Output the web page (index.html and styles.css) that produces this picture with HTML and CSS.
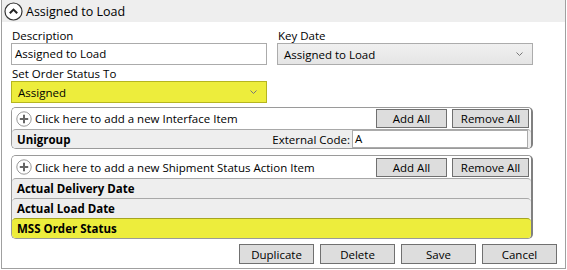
FILE: index.html
```html
<!DOCTYPE html>
<html lang="en">
<head>
  <meta charset="utf-8" />
  <title>Assigned to Load</title>
  <link rel="stylesheet" href="styles.css">
</head>
<body>
  <div class="panel">
    <div class="panel-header">
      <svg class="collapse-icon" width="19" height="19" viewBox="0 0 19 19">
        <circle cx="9.5" cy="9.5" r="8.5" fill="#fff" stroke="#333" stroke-width="1.2" />
        <path d="M5.8 11.3 L9.5 7.6 L13.2 11.3" fill="none" stroke="#222" stroke-width="2" />
      </svg>
      <span class="panel-title">Assigned to Load</span>
    </div>

    <div class="panel-body">
      <div class="form-grid">
        <div class="field">
          <label class="field-label">Description</label>
          <div class="textbox">Assigned to Load</div>
        </div>
        <div class="field">
          <label class="field-label">Key Date</label>
          <div class="combo">
            <span>Assigned to Load</span>
            <svg class="combo-arrow" width="7" height="4" viewBox="0 0 7 4"><path d="M0.5 0.5 L3.5 3.5 L6.5 0.5" fill="none" stroke="#777" stroke-width="1" /></svg>
          </div>
        </div>
        <div class="field">
          <label class="field-label">Set Order Status To</label>
          <div class="combo combo-highlight">
            <span>Assigned</span>
            <svg class="combo-arrow" width="7" height="4" viewBox="0 0 7 4"><path d="M0.5 0.5 L3.5 3.5 L6.5 0.5" fill="none" stroke="#777" stroke-width="1" /></svg>
          </div>
        </div>
      </div>

      <div class="item-box">
        <div class="add-row">
          <svg class="plus-icon" width="16" height="16" viewBox="0 0 16 16">
            <circle cx="8" cy="8" r="7.2" fill="#fff" stroke="#999" stroke-width="1" />
            <path d="M8 3.8 V12.2 M3.8 8 H12.2" stroke="#666" stroke-width="2" />
          </svg>
          <span class="add-text">Click here to add a new Interface Item</span>
          <button class="btn btn-small">Add All</button>
          <button class="btn btn-small btn-wide">Remove All</button>
        </div>
        <div class="item-row item-row-short">
          <span class="item-name">Unigroup</span>
          <span class="code-label">External Code:</span>
          <div class="code-input">A</div>
        </div>
      </div>

      <div class="item-box item-box-actions">
        <div class="add-row add-row-tall">
          <svg class="plus-icon" width="16" height="16" viewBox="0 0 16 16">
            <circle cx="8" cy="8" r="7.2" fill="#fff" stroke="#999" stroke-width="1" />
            <path d="M8 3.8 V12.2 M3.8 8 H12.2" stroke="#666" stroke-width="2" />
          </svg>
          <span class="add-text">Click here to add a new Shipment Status Action Item</span>
          <button class="btn btn-small">Add All</button>
          <button class="btn btn-small btn-wide">Remove All</button>
        </div>
        <div class="item-row"><span class="item-name">Actual Delivery Date</span></div>
        <div class="item-row"><span class="item-name">Actual Load Date</span></div>
        <div class="item-row item-row-highlight"><span class="item-name">MSS Order Status</span></div>
      </div>

      <div class="actions">
        <button class="btn btn-action">Duplicate</button>
        <button class="btn btn-action">Delete</button>
        <button class="btn btn-action">Save</button>
        <button class="btn btn-action">Cancel</button>
      </div>
    </div>
  </div>
</body>
</html>
```

FILE: styles.css
```css
*, *::before, *::after {
  box-sizing: border-box;
}

body {
  margin: 0;
  background: white;
  font-family: "Open Sans", "Noto Sans", sans-serif;
  font-size: 11.5px;
  color: #000;
}

.panel {
  margin-left: 1px;
  width: 565px;
  height: 269px;
  border: 1px solid #a0a0a0;
  border-top: none;
}

.panel-header {
  display: flex;
  align-items: center;
  gap: 3px;
  height: 22px;
  padding-left: 2px;
  background: #eeeeee;
}

.panel-title {
  font-size: 12.5px;
}

.panel-body {
  padding: 7px 8px 0 9px;
}

.form-grid {
  display: grid;
  grid-template-columns: 256px 256px;
  column-gap: 10px;
  row-gap: 2px;
}

.field {
  display: flex;
  flex-direction: column;
}

.field-label {
  height: 14px;
  line-height: 14px;
  padding-left: 1px;
}

.textbox {
  height: 22px;
  border: 1px solid #ababab;
  padding: 0 3px;
  line-height: 20px;
}

.combo {
  display: flex;
  align-items: center;
  justify-content: space-between;
  height: 22px;
  border: 1px solid #acacac;
  background: linear-gradient(#f0f0f0, #e5e5e5);
  padding: 0 9px 0 6px;
}

.combo-highlight {
  background: #eded3c;
  border-color: #b5b520;
}

.item-box {
  width: 522px;
  margin-top: 4px;
  border: 1px solid #9a9a9a;
  border-right: 2px solid #808080;
  border-radius: 5px;
  overflow: hidden;
}

.item-box-actions {
  margin-top: 6px;
}

.add-row {
  display: flex;
  align-items: center;
  height: 21px;
  padding: 0 2px 0 4px;
  background: white;
}

.add-row-tall {
  height: 22px;
}

.plus-icon {
  margin-right: 3px;
}

.add-text {
  flex: 1;
}

.btn {
  font-family: inherit;
  font-size: 11.5px;
  color: #000;
  background: #dddddd;
  border: 1px solid #707070;
  padding: 0;
}

.btn-small {
  width: 71px;
  height: 19px;
  margin-left: 5px;
}

.btn-wide {
  width: 77px;
}

.item-row {
  display: flex;
  align-items: center;
  height: 20px;
  padding-left: 5px;
  background: #eeeeee;
  border-top: 1px solid #a8a8a8;
  border-radius: 4px 4px 0 0;
  font-weight: bold;
}

.item-row-short {
  height: 19px;
}

.item-row-highlight {
  background: #eded3c;
  border-top-color: #a5a520;
}

.item-name {
  flex: 1;
}

.code-label {
  font-weight: normal;
  margin-right: 2px;
}

.code-input {
  width: 176px;
  height: 18px;
  margin-right: 3px;
  border: 1px solid #ababab;
  background: white;
  font-weight: normal;
  padding-left: 2px;
  line-height: 16px;
}

.actions {
  display: flex;
  justify-content: flex-end;
  gap: 6px;
  margin-top: 5px;
}

.btn-action {
  width: 75px;
  height: 20px;
}
```
